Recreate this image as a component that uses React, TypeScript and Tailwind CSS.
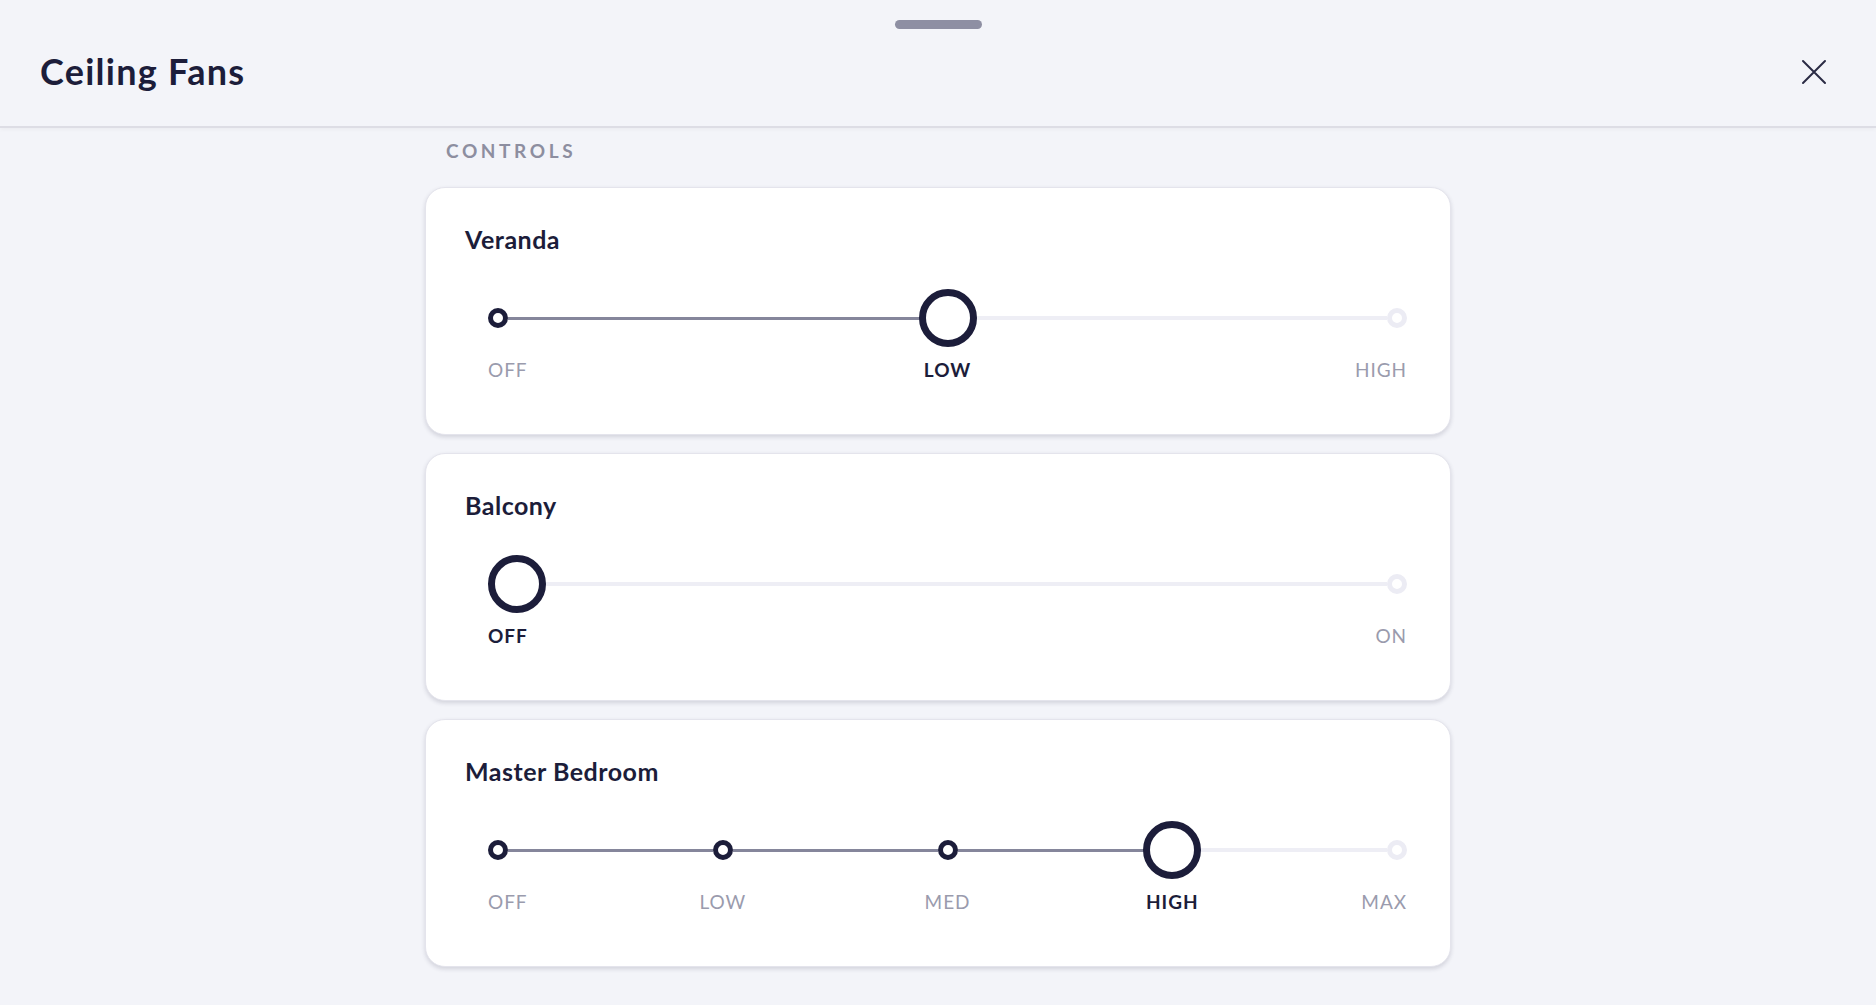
type Fan = {
  name: string;
  stops: string[];
  value: number;
};

const FANS: Fan[] = [
  { name: 'Veranda', stops: ['OFF', 'LOW', 'HIGH'], value: 1 },
  { name: 'Balcony', stops: ['OFF', 'ON'], value: 0 },
  { name: 'Master Bedroom', stops: ['OFF', 'LOW', 'MED', 'HIGH', 'MAX'], value: 3 },
];

// first slot hugs the left edge, last slot the right, the rest are centred
const slotAlign = (i: number, last: number) =>
  i === 0 ? 'justify-start' : i === last ? 'justify-end' : 'justify-center';

function SpeedSlider({ stops, value }: { stops: string[]; value: number }) {
  const last = stops.length - 1;

  return (
    <div className="ml-[23px] mr-[4px]">
      {/* ── Track ───────────────────────────────────── */}
      <div className="flex h-[58px] items-center">
        {stops.map((s, i) => (
          <div key={s} className="contents">
            {i > 0 && (
              <div
                className={
                  'flex-1 ' + (i <= value ? 'h-[3px] bg-[#85869b]' : 'h-[4px] bg-[#eeeef5]')
                }
              />
            )}
            <div className={`flex w-[20px] shrink-0 ${slotAlign(i, last)}`}>
              {i === value ? (
                <span className="relative z-10 h-[58px] w-[58px] shrink-0 rounded-full border-[7px] border-[#1c1d3a] bg-white" />
              ) : (
                <span
                  className={
                    'h-[20px] w-[20px] shrink-0 rounded-full border-[5px] bg-white ' +
                    (i < value ? 'border-[#1c1d3a]' : 'border-[#ececf4]')
                  }
                />
              )}
            </div>
          </div>
        ))}
      </div>

      {/* ── Labels ──────────────────────────────────── */}
      <div className="mt-[11px] flex justify-between text-[19px] leading-[23px] tracking-[0.05em]">
        {stops.map((s, i) => (
          <div key={s} className={`flex w-[20px] shrink-0 ${slotAlign(i, last)}`}>
            <span
              className={
                'whitespace-nowrap ' + (i === value ? 'font-bold text-[#1c1d3a]' : 'text-[#9a9bad]')
              }
            >
              {s}
            </span>
          </div>
        ))}
      </div>
    </div>
  );
}

function FanCard({ fan }: { fan: Fan }) {
  return (
    <div className="rounded-[20px] border border-[#e4e4ec] bg-white px-[39px] pb-[53px] pt-[37px] shadow-[0_2px_4px_rgba(40,40,70,0.16)]">
      <h2 className="text-[25px] font-bold leading-[29px] tracking-[0.02em] text-[#1c1d3a]">{fan.name}</h2>
      <div className="mt-[35px]">
        <SpeedSlider stops={fan.stops} value={fan.value} />
      </div>
    </div>
  );
}

function CloseIcon() {
  return (
    <svg width="26" height="26" viewBox="0 0 26 26" fill="none" stroke="currentColor" strokeWidth="2" strokeLinecap="round">
      <path d="M2 2L24 24M24 2L2 24" />
    </svg>
  );
}

export default function App() {
  return (
    <div className="min-h-screen bg-[#f3f4f9] text-[#1c1d3a]" style={{ fontFamily: 'Lato, "Noto Sans", sans-serif' }}>
      {/* ── Header ──────────────────────────────────── */}
      <header className="flex h-[128px] flex-col border-b-2 border-[#dddde5] pt-[20px] shadow-[0_2px_4px_rgba(0,0,0,0.03)]">
        <div className="mx-auto h-[9px] w-[87px] rounded-full bg-[#8e8fa3]" />
        <div className="mt-[21px] flex items-center justify-between pl-[40px] pr-[49px]">
          <h1 className="text-[36px] font-bold leading-[43px] tracking-[0.035em] text-[#1c1d3a]">Ceiling Fans</h1>
          <button aria-label="Close" className="text-[#2a2b45]">
            <CloseIcon />
          </button>
        </div>
      </header>

      {/* ── Controls ────────────────────────────────── */}
      <main className="mx-auto w-[1026px] pb-10">
        <p className="ml-[21px] mt-[11px] text-[19px] font-bold leading-[23px] tracking-[0.19em] text-[#8d8ea0]">
          CONTROLS
        </p>
        <div className="mt-[25px] flex flex-col gap-[18px]">
          {FANS.map((f) => (
            <FanCard key={f.name} fan={f} />
          ))}
        </div>
      </main>
    </div>
  );
}
